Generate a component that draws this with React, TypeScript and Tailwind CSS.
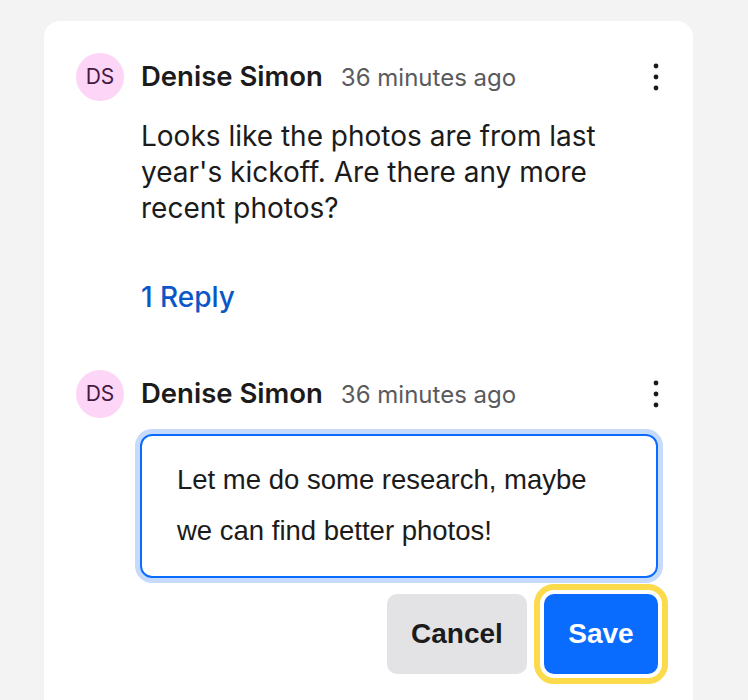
import React from 'react';

const KebabIcon = () => (
  <svg width="10" height="30" viewBox="0 0 10 30" fill="#1a1a1a" aria-hidden="true">
    <circle cx="5" cy="4" r="2.4" />
    <circle cx="5" cy="15" r="2.4" />
    <circle cx="5" cy="26" r="2.4" />
  </svg>
);

const CommentHeader: React.FC<{ name: string; time: string }> = ({ name, time }) => (
  <div className="flex items-center">
    <div className="flex h-12 w-12 shrink-0 items-center justify-center rounded-full bg-[#fdd5f6] text-[21px] text-[#45193f]">
      DS
    </div>
    <div className="ml-[17px] flex flex-1 items-baseline">
      <span className="text-[27.5px] font-semibold text-[#1b1b1b]">{name}</span>
      <span className="ml-[18px] text-[24px] text-[#5a5a5e]">{time}</span>
    </div>
    <button className="flex h-10 w-[10px] items-center justify-center">
      <KebabIcon />
    </button>
  </div>
);

export default function App() {
  return (
    <div className="min-h-[700px] bg-[#f3f3f3] pl-[44px] pr-[55px] pt-[21px] font-['Inter',sans-serif]">
      <div className="h-[720px] w-[649px] rounded-t-[16px] bg-white px-8 pt-8">
        <CommentHeader name="Denise Simon" time="36 minutes ago" />
        <div className="ml-[65px]">
          <p className="mt-[17px] text-[28px] leading-[36px] text-[#1b1b1b]">
            Looks like the photos are from last
            <br />
            year's kickoff. Are there any more
            <br />
            recent photos?
          </p>
          <button className="mt-[54px] block text-[28px] font-medium leading-[35px] text-[#0b57c8]">
            1 Reply
          </button>
        </div>

        <div className="mt-[55px]">
          <CommentHeader name="Denise Simon" time="36 minutes ago" />
        </div>

        <div className="ml-[64px] mt-4 w-[518px]">
          <div className="rounded-[12px] border-2 border-[#0a6cff] px-[35px] pb-[20px] pt-[18px] font-['Liberation_Sans',Arial,sans-serif] text-[27.5px] leading-[51px] text-[#1b1b1b] shadow-[0_0_0_5px_#c6dafc]">
            Let me do some research, maybe
            <br />
            we can find better photos!
          </div>
          <div className="mt-4 flex justify-end gap-[17px] font-['Liberation_Sans',Arial,sans-serif]">
            <button className="h-20 w-[140px] rounded-[10px] bg-[#e3e3e5] text-[28px] font-bold text-[#1b1b1b]">
              Cancel
            </button>
            <button className="h-20 w-[114px] rounded-[10px] bg-[#0a6cff] text-[28px] font-bold text-white outline-[6px] outline-offset-[4px] outline-[#fbda4b] outline-solid">
              Save
            </button>
          </div>
        </div>
      </div>
    </div>
  );
}
